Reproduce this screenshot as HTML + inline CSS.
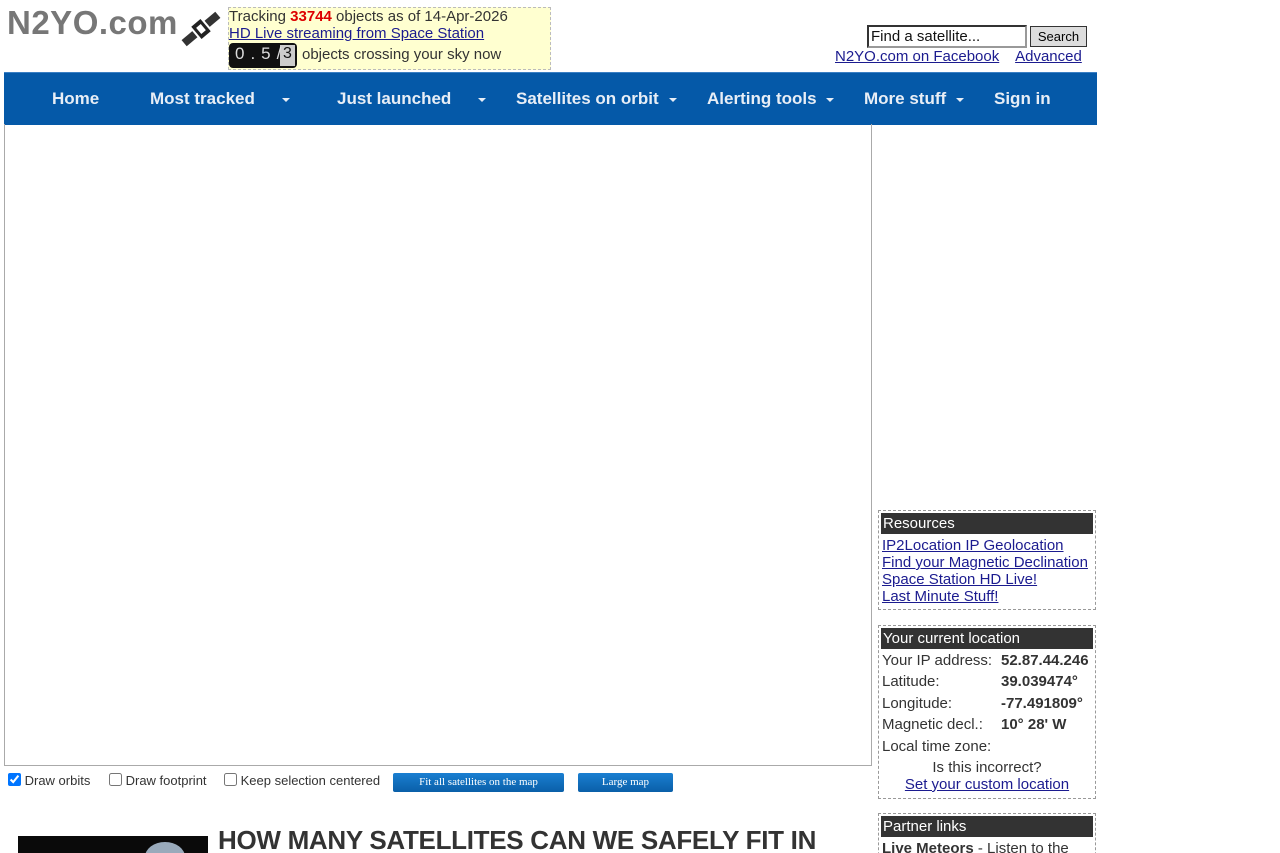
<!DOCTYPE html>
<html style="overflow:hidden"><head><style>
body{margin:0;width:1280px;height:853px;overflow:hidden;background:#fff;font-family:"Liberation Sans",sans-serif;position:relative}
.a{position:absolute}
a{color:#1b1b8f;text-decoration:underline}
.nav{left:4px;top:72px;width:1093px;height:52px;background:#0559a8;border-top:1px solid #3a7fc4}
.nav span{position:absolute;top:16px;color:#e8eef6;font-weight:bold;font-size:17px}
.nav i{position:absolute;top:25px;width:0;height:0;border-left:4px solid transparent;border-right:4px solid transparent;border-top:4px solid #e8eef6}
.box{border:1px dashed #999;width:216px}
.hd{background:#333;color:#fff;font-size:15px;padding:2px 2px 2px;margin:2px 2px 3px 2px;line-height:17px}
.lk{font-size:15px;line-height:17px;padding-left:3px}
.row{font-size:15px;height:21.4px;position:relative;padding-left:3px;color:#333}
.row b{position:absolute;left:122px}
.btn{background:linear-gradient(#1a7fd1,#0a5fa8);color:#fff;font-family:"Liberation Serif",serif;font-size:11px;text-align:center;line-height:19px;border-radius:2px;height:19px}
.cb{font-size:13px;color:#333}
</style></head><body>
<div class="a" style="left:7px;top:4px;font-size:33px;font-weight:bold;color:#777;letter-spacing:0.5px">N2YO.com</div>
<svg class="a" style="left:178px;top:8px" width="46" height="42" viewBox="0 0 46 42"><g transform="rotate(-40 23 21)" fill="#333"><rect x="1" y="17" width="14" height="8"/><rect x="31" y="17" width="14" height="8"/><rect x="17" y="13" width="12" height="16" fill="#222"/><rect x="20" y="17" width="6" height="8" fill="#fff"/></g></svg>
<div class="a" style="left:228px;top:7px;width:321px;height:61px;background:#ffffd0;border:1px dashed #bbb"></div>
<div class="a" style="left:229px;top:8px;font-size:15px;color:#333;line-height:17px">Tracking <b style="color:#d00">33744</b> objects as of 14-Apr-2026<br><a>HD Live streaming from Space Station</a></div>
<div class="a" style="left:229px;top:43px;width:68px;height:25px;background:#111;border-radius:4px"></div>
<div class="a" style="left:280px;top:45px;width:15px;height:21px;background:#ccc;color:#111;font-size:16px;text-align:center">3</div>
<div class="a" style="left:235px;top:44px;color:#ddd;font-size:17px;letter-spacing:6px">0.5/</div>
<div class="a" style="left:302px;top:46px;font-size:15px;color:#333">objects crossing your sky now</div>
<div class="a" style="left:867px;top:25px;width:154px;height:19px;border:2px solid #333;border-right-color:#999;border-bottom-color:#999;font-size:15px;line-height:19px;padding-left:2px;color:#111">Find a satellite...</div>
<div class="a" style="left:1030px;top:26px;width:55px;height:19px;background:#ddd;border:1px solid #333;font-size:13px;text-align:center;line-height:20px">Search</div>
<div class="a" style="left:835px;top:48px;font-size:15px"><a>N2YO.com on Facebook</a> &nbsp;&nbsp; <a>Advanced</a></div>
<div class="a nav">
<span style="left:48px">Home</span><span style="left:146px">Most tracked</span><i style="left:278px"></i>
<span style="left:333px">Just launched</span><i style="left:474px"></i>
<span style="left:512px">Satellites on orbit</span><i style="left:665px"></i>
<span style="left:703px">Alerting tools</span><i style="left:822px"></i>
<span style="left:860px">More stuff</span><i style="left:952px"></i><span style="left:990px">Sign in</span></div>
<div class="a" style="left:4px;top:124px;width:866px;height:641px;border:1px solid #aaa;border-top:none"></div>
<div class="a cb" style="left:8px;top:773px"><input type="checkbox" checked style="margin:0;width:13px;height:13px;vertical-align:-1px"> Draw orbits</div>
<div class="a cb" style="left:109px;top:773px"><input type="checkbox" style="margin:0;width:13px;height:13px;vertical-align:-1px"> Draw footprint</div>
<div class="a cb" style="left:224px;top:773px"><input type="checkbox" style="margin:0;width:13px;height:13px;vertical-align:-1px"> Keep selection centered</div>
<div class="a btn" style="left:393px;top:773px;width:171px">Fit all satellites on the map</div>
<div class="a btn" style="left:578px;top:773px;width:95px">Large map</div>
<div class="a" style="left:18px;top:836px;width:190px;height:17px;background:#0a0a0a;overflow:hidden"><div style="position:absolute;left:127px;top:6px;width:40px;height:30px;border-radius:50%;background:#9ab"></div></div>
<div class="a" style="left:218px;top:825px;font-size:26px;font-weight:bold;color:#333;letter-spacing:-0.3px">HOW MANY SATELLITES CAN WE SAFELY FIT IN</div>
<div class="a box" style="left:878px;top:510px;height:98px"><div class="hd">Resources</div>
<div class="lk"><a>IP2Location IP Geolocation</a><br><a>Find your Magnetic Declination</a><br><a>Space Station HD Live!</a><br><a>Last Minute Stuff!</a></div></div>
<div class="a box" style="left:878px;top:625px;height:172px"><div class="hd">Your current location</div>
<div class="row">Your IP address:<b>52.87.44.246</b></div>
<div class="row">Latitude:<b>39.039474°</b></div>
<div class="row">Longitude:<b>-77.491809°</b></div>
<div class="row">Magnetic decl.:<b>10° 28' W</b></div>
<div class="row">Local time zone:</div>
<div style="text-align:center;font-size:15px;color:#333;line-height:17px">Is this incorrect?<br><a>Set your custom location</a></div></div>
<div class="a box" style="left:878px;top:813px;height:50px"><div class="hd">Partner links</div>
<div class="lk" style="color:#333"><b>Live Meteors</b> - Listen to the</div></div>
</body></html>
